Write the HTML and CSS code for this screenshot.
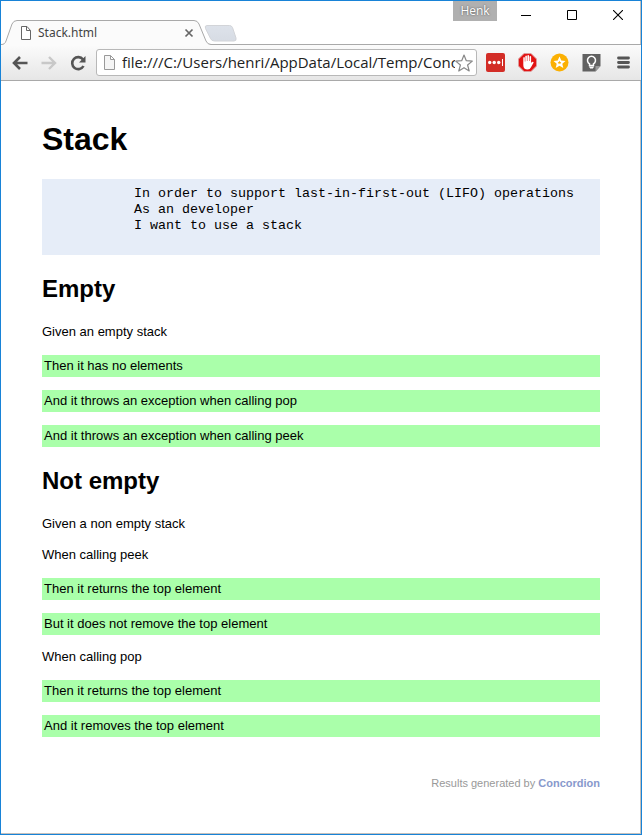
FILE: index.html
```html
<!DOCTYPE html>
<html lang="en">
<head>
<meta charset="utf-8">
<title>Stack.html</title>
<link rel="stylesheet" href="styles.css">
</head>
<body>
<div class="window">
  <header class="titlebar">
    <div class="tab">
      <svg class="tab-shape" width="240" height="26" viewBox="0 0 240 26" aria-hidden="true">
        <defs>
          <linearGradient id="new-tab" x1="0" y1="0" x2="0" y2="1"><stop offset="0" stop-color="#dde2ea"/><stop offset="1" stop-color="#d7dce4"/></linearGradient>
        </defs>
        <path d="M206 5.500H228.500q2 0 3 2l3.500 10.500q.7 3-2 3H213.500q-3 0-4-2.500l-5-10q-1-3 1.500-3z" fill="url(#new-tab)" stroke="#d2d4d8"/>
        <path d="M0 24.500C3 24.500 4 23.500 5 21L11 4Q12.500.5 16 .5H193Q196.500.5 198 4L205 21Q206.500 24.500 210 24.500V26H0z" fill="#fbfbfb"/>
        <path d="M0 24.500C3 24.500 4 23.500 5 21L11 4Q12.500.5 16 .5H193Q196.500.5 198 4L205 21Q206.500 24.500 210 24.500H240" fill="none" stroke="#a9a9a9"/>
      </svg>
      <svg class="tab-icon" width="12" height="14" viewBox="0 0 12 14" aria-hidden="true"><path d="M1.500.5H7L10.500 4.500V13.500H1.500zM6.500.5V4.500H10.500" fill="#fff" stroke="#666"/></svg>
      <span class="tab-title">Stack.html</span>
      <button class="tab-close" aria-label="Close tab"><svg width="10" height="10" viewBox="0 0 10 10"><path d="M1.500 1.500l7 7M8.500 1.500l-7 7" stroke="#666" stroke-width="1.700"/></svg></button>
    </div>
    <div class="window-controls">
      <button class="profile">Henk</button>
      <button class="control" aria-label="Minimize"><svg width="10" height="10" viewBox="0 0 10 10"><path d="M0 5.500H10" stroke="#000"/></svg></button>
      <button class="control" aria-label="Maximize"><svg width="10" height="10" viewBox="0 0 10 10"><path d="M.5.5h9v9h-9z" fill="none" stroke="#000"/></svg></button>
      <button class="control" aria-label="Close"><svg width="10" height="10" viewBox="0 0 10 10"><path d="M0 0l10 10M10 0L0 10" stroke="#000" stroke-width="1.100"/></svg></button>
    </div>
  </header>
  <nav class="toolbar">
    <button class="nav-button" aria-label="Back"><svg width="16" height="16" viewBox="0 0 16 16"><path d="M15.500 8H2.500M8 2L2 8l6 6" fill="none" stroke="#555" stroke-width="2.600"/></svg></button>
    <button class="nav-button" aria-label="Forward"><svg width="16" height="16" viewBox="0 0 16 16"><path d="M.5 8h13M8 2l6 6-6 6" fill="none" stroke="#c8c8c8" stroke-width="2.400"/></svg></button>
    <button class="nav-button" aria-label="Reload"><svg width="16" height="16" viewBox="0 0 16 16"><path d="M13 4.500A6 6 0 1 0 13.500 11" fill="none" stroke="#555" stroke-width="2.600"/><path d="M15.500 1v6.500H9z" fill="#555"/></svg></button>
    <div class="address">
      <svg width="13" height="15" viewBox="0 0 13 15" aria-hidden="true"><path d="M1.500.5H7.500L11.500 4.500V14.500H1.500zM7.500.5V4.500H11.500" fill="#f5f5f5" stroke="#999"/></svg>
      <input class="url" type="text" aria-label="Address" value="file:///C:/Users/henri/AppData/Local/Temp/Concordion/Stack.html">
      <button class="star" aria-label="Bookmark this page"><svg width="18" height="18" viewBox="0 0 18 18"><path d="M9 1l2.300 5.700 6 .4-4.700 3.900 1.600 6L9 13.700 3.800 17l1.600-6L.7 7.100l6-.4z" fill="#fff" stroke="#888" stroke-width="1.200" stroke-linejoin="round"/></svg></button>
    </div>
    <div class="extensions">
      <button aria-label="Password manager"><svg width="19" height="19" viewBox="0 0 19 19"><rect width="19" height="19" rx="2" fill="#d32d27"/><g fill="#fff"><circle cx="3.700" cy="9.500" r="1.700"/><circle cx="8.200" cy="9.500" r="1.700"/><circle cx="12.700" cy="9.500" r="1.700"/><path d="M16 6h1v7h-1z"/></g></svg></button>
      <button aria-label="Ad blocker"><svg width="19" height="19" viewBox="0 0 19 19"><path d="M6 .5h7L18.500 6v7L13 18.500H6L.5 13V6z" fill="#e21313" stroke="#d99"/><path d="M5.300 9V4.700q.9-1.200 1.500 0V8.500h.5V3.200q.9-1.200 1.600 0V8h.5V2.500q.9-1.200 1.600 0V8h.5V3.500q.9-1.200 1.600 0V10q1-1.500 2.300-1.100.6.500-.3 1.600L13 14.200q-1 2.300-3.300 2.300Q5.300 16.500 5.300 12z" fill="#fff"/></svg></button>
      <button aria-label="Favorites"><svg width="19" height="19" viewBox="0 0 19 19"><circle cx="9.500" cy="9.500" r="9" fill="#fbb003"/><path d="M9.500 3.500l1.800 4 4.200.4-3.200 2.900 1 4.300-3.800-2.300-3.800 2.300 1-4.300-3.200-2.900 4.200-.4z" fill="#fff"/><path d="M9.500 7.700l.6 1.200 1.200.1-.9.900.2 1.200-1.100-.6-1.100.6.200-1.200-.9-.9 1.200-.1z" fill="#fbb003"/></svg></button>
      <button aria-label="Notes"><svg width="19" height="19" viewBox="0 0 19 19"><path d="M.5 1h18v12l-5 5.500H.5z" fill="#616161"/><path d="M13.500 13h5l-5 5.500z" fill="#999"/><path d="M7.500 12.500v-1.700a4 4 0 1 1 4 0v1.700z" fill="none" stroke="#fff" stroke-width="1.500"/><path d="M7 13.500h5v1H11v1H8v-1H7z" fill="#fff"/></svg></button>
      <button aria-label="Menu"><svg width="19" height="19" viewBox="0 0 19 19"><path d="M4.500 5h10M4.500 9.500h10M4.500 14h10" stroke="#555" stroke-width="2.800" stroke-linecap="round"/></svg></button>
    </div>
  </nav>
  <main class="page">
    <h1>Stack</h1>
    <pre class="story">           In order to support last-in-first-out (LIFO) operations
           As an developer
           I want to use a stack
 </pre>
    <h2>Empty</h2>
    <p>Given an empty stack</p>
    <p class="success">Then it has no elements</p>
    <p class="success">And it throws an exception when calling pop</p>
    <p class="success">And it throws an exception when calling peek</p>
    <h2>Not empty</h2>
    <p>Given a non empty stack</p>
    <p>When calling peek</p>
    <p class="success">Then it returns the top element</p>
    <p class="success">But it does not remove the top element</p>
    <p>When calling pop</p>
    <p class="success">Then it returns the top element</p>
    <p class="success">And it removes the top element</p>
    <footer>Results generated by <a href="#">Concordion</a></footer>
  </main>
</div>
</body>
</html>
```
FILE: styles.css
```css
* { box-sizing: border-box; }
body {
  margin: 0;
  background: #fff;
  color: #000;
  font: 13px/18px "Liberation Sans", Arial, sans-serif;
}
button {
  display: flex;
  align-items: center;
  justify-content: center;
  padding: 0;
  border: 0;
  background: none;
}
svg { display: block; flex: none; }

.window {
  min-height: 100vh;
  border: 1px solid #1883d7;
  box-shadow: inset -1px -1px #c4c0bc;
}

.titlebar {
  display: flex;
  justify-content: space-between;
  height: 44px;
  border-bottom: 1px solid #a9a9a9;
}
.tab {
  position: relative;
  display: flex;
  align-items: center;
  width: 240px;
  height: 26px;
  margin-top: 19px;
  padding: 0 44px 0 19px;
}
.tab-shape { position: absolute; top: 0; left: 0; }
.tab-icon, .tab-title, .tab-close { position: relative; }
.tab-title {
  flex: 1;
  margin-left: 6px;
  color: #444;
  font: 12px/16px "Noto Sans", "Open Sans", sans-serif;
}
.tab-close { width: 16px; height: 16px; }
.window-controls { display: flex; align-items: flex-start; }
.profile {
  width: 44px;
  height: 20px;
  margin-right: 6px;
  background: #b0b0b0;
  color: #fff;
  font: 12px/16px "Open Sans", "Noto Sans", sans-serif;
  text-shadow: 0 0 2px #444;
}
.control { width: 46px; height: 28px; }

.toolbar {
  display: flex;
  align-items: center;
  height: 36px;
  padding: 0 8px 0 11px;
  background: linear-gradient(#fbfbfb, #e6e6e6);
  border-bottom: 1px solid #a9a9a9;
}
.nav-button { width: 16px; height: 28px; margin-right: 13px; }
.nav-button + .address { margin-left: -3px; }
.address {
  display: flex;
  flex: 1;
  align-items: center;
  min-width: 0;
  height: 27px;
  margin-right: 9px;
  padding: 0 3px 0 6px;
  border: 1px solid #b8b8b8;
  border-radius: 3px;
  background: #fff;
}
.url {
  flex: 1;
  min-width: 0;
  height: 22px;
  margin-left: 6px;
  padding: 0 0 2px;
  border: 0;
  outline: 0;
  background: none;
  color: #222;
  font: 15px/20px "Open Sans", "Noto Sans", sans-serif;
}
.extensions { display: flex; gap: 13px; }

.page { padding: 40px 41px 36px; }
h1 { margin: 0 0 22px; font-size: 32px; line-height: 36px; }
h2 { margin: 21px 0; font-size: 24px; line-height: 26px; }
p { margin: 13px 0; }
.success { padding: 2px; background: #afa; }
p:not(.success) + .success { margin-top: 14px; }
.story {
  margin: 0;
  padding: 7px 4px 5px;
  background: #e6edf8;
  font: 10pt/16px "Liberation Mono", "Courier New", monospace;
}
footer {
  margin-top: 37px;
  color: #999;
  font-size: 11px;
  text-align: right;
}
footer a { color: #89c; font-weight: bold; text-decoration: none; }
```
